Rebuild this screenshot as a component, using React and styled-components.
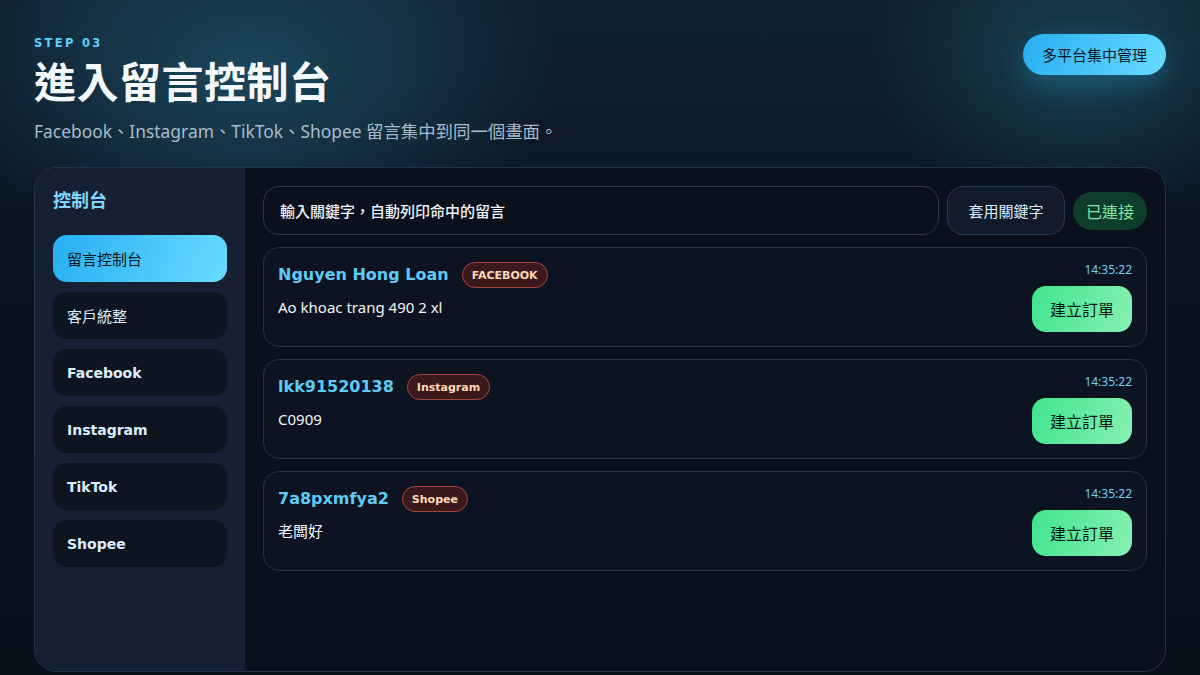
import React from 'react';
import styled, { createGlobalStyle } from 'styled-components';

const GlobalStyle = createGlobalStyle`
  html, body {
    margin: 0;
    padding: 0;
    height: 100%;
    background: #0a101a;
  }
  * { box-sizing: border-box; }
`;

const CJK = `"Noto Sans", "Noto Sans CJK TC", sans-serif`;
const BOLD = `"DejaVu Sans", "Noto Sans CJK TC", sans-serif`;

const comments = [
  { name: 'Nguyen Hong Loan', platform: 'FACEBOOK', text: 'Ao khoac trang 490 2 xl', time: '14:35:22' },
  { name: 'lkk91520138', platform: 'Instagram', text: 'C0909', time: '14:35:22' },
  { name: '7a8pxmfya2', platform: 'Shopee', text: '老闆好', time: '14:35:22' },
];

const navItems = [
  { label: '留言控制台', active: true },
  { label: '客戶統整' },
  { label: 'Facebook', latin: true },
  { label: 'Instagram', latin: true },
  { label: 'TikTok', latin: true },
  { label: 'Shopee', latin: true },
];

export default function App() {
  return (
    <>
      <GlobalStyle />
      <Page>
        <Header>
          <div>
            <Step>STEP 03</Step>
            <Title>進入留言控制台</Title>
            <Subtitle>Facebook、Instagram、TikTok、Shopee 留言集中到同一個畫面。</Subtitle>
          </div>
          <PillButton>多平台集中管理</PillButton>
        </Header>

        <Panel>
          <Sidebar>
            <SideTitle>控制台</SideTitle>
            <NavList>
              {navItems.map((item) => (
                <NavItem key={item.label} $active={item.active} $latin={item.latin}>
                  {item.label}
                </NavItem>
              ))}
            </NavList>
          </Sidebar>

          <Content>
            <Toolbar>
              <KeywordInput>輸入關鍵字，自動列印命中的留言</KeywordInput>
              <ApplyButton>套用關鍵字</ApplyButton>
              <Status>已連接</Status>
            </Toolbar>

            <CardList>
              {comments.map((c) => (
                <Card key={c.name}>
                  <CardMain>
                    <CardHead>
                      <Author>{c.name}</Author>
                      <Badge>{c.platform}</Badge>
                    </CardHead>
                    <Message>{c.text}</Message>
                  </CardMain>
                  <CardSide>
                    <Time>{c.time}</Time>
                    <OrderButton>建立訂單</OrderButton>
                  </CardSide>
                </Card>
              ))}
            </CardList>
          </Content>
        </Panel>
      </Page>
    </>
  );
}

const Page = styled.div`
  width: 1200px;
  height: 675px;
  overflow: hidden;
  padding: 34px 34px 0;
  font-family: ${CJK};
  color: #e6eef8;
  background:
    radial-gradient(ellipse 440px 280px at 250px 70px, rgba(34, 98, 124, 0.6), transparent 70%),
    radial-gradient(ellipse 280px 210px at 1080px 60px, rgba(32, 94, 108, 0.55), transparent 75%),
    linear-gradient(180deg, #10202e 0%, #0b1320 40%, #0a101a 100%);
`;

const Header = styled.header`
  display: flex;
  justify-content: space-between;
  align-items: flex-start;
  height: 133px;
`;

const Step = styled.div`
  font-family: ${BOLD};
  font-weight: 700;
  font-size: 11.5px;
  letter-spacing: 2.3px;
  color: #5fd0ff;
  line-height: 18px;
`;

const Title = styled.h1`
  margin: 4px 0 0;
  font-size: 42px;
  font-weight: 700;
  line-height: 52px;
  color: #f4f8fc;
  letter-spacing: 0.5px;
`;

const Subtitle = styled.p`
  margin: 11px 0 0;
  font-size: 17.4px;
  line-height: 24px;
  color: #a8bccd;
`;

const PillButton = styled.div`
  height: 41px;
  padding: 0 19px;
  display: flex;
  align-items: center;
  border-radius: 21px;
  font-size: 15px;
  color: #0b1a2a;
  background: linear-gradient(110deg, #29aef2, #68dcff);
  box-shadow: 0 10px 28px rgba(41, 174, 242, 0.28);
`;

const Panel = styled.section`
  display: flex;
  height: 505px;
  border: 1px solid #22344a;
  border-radius: 22px;
  overflow: hidden;
  background: #0b111c;
`;

const Sidebar = styled.aside`
  width: 210px;
  flex-shrink: 0;
  background: #162032;
  padding: 18px 18px;
`;

const SideTitle = styled.div`
  font-size: 18px;
  font-weight: 700;
  color: #7fd6ff;
  line-height: 28px;
  margin-bottom: 21px;
`;

const NavList = styled.nav`
  display: flex;
  flex-direction: column;
  gap: 10px;
`;

const NavItem = styled.div`
  height: 47px;
  display: flex;
  align-items: center;
  padding: 0 14px;
  border-radius: 14px;
  font-family: ${(p) => (p.$latin ? BOLD : CJK)};
  font-weight: ${(p) => (p.$latin ? 700 : 400)};
  font-size: ${(p) => (p.$latin ? '14px' : '15px')};
  color: ${(p) => (p.$active ? '#0a1624' : '#dcefff')};
  background: ${(p) => (p.$active ? 'linear-gradient(110deg, #27aef2, #69dcff)' : '#0d1520')};
`;

const Content = styled.main`
  flex: 1;
  padding: 18px;
  display: flex;
  flex-direction: column;
  gap: 12px;
`;

const Toolbar = styled.div`
  display: flex;
  align-items: center;
  gap: 8px;
`;

const KeywordInput = styled.div`
  flex: 1;
  height: 49px;
  display: flex;
  align-items: center;
  padding: 0 16px;
  border: 1px solid #263a52;
  border-radius: 16px;
  font-size: 15px;
  font-weight: 500;
  color: #eef4fb;
`;

const ApplyButton = styled.div`
  height: 49px;
  width: 118px;
  display: flex;
  align-items: center;
  justify-content: center;
  border: 1px solid #263a52;
  border-radius: 16px;
  background: #111a28;
  font-size: 15px;
  color: #dcecfb;
`;

const Status = styled.div`
  height: 38px;
  width: 74px;
  display: flex;
  align-items: center;
  justify-content: center;
  border-radius: 19px;
  background: #0f3d2b;
  font-size: 16px;
  color: #7ee8a4;
`;

const CardList = styled.div`
  display: flex;
  flex-direction: column;
  gap: 12px;
`;

const Card = styled.article`
  height: 100px;
  display: flex;
  justify-content: space-between;
  padding: 14px;
  border: 1px solid #223349;
  border-radius: 16px;
  background: #0d1320;
`;

const CardMain = styled.div`
  display: flex;
  flex-direction: column;
  gap: 8px;
`;

const CardHead = styled.div`
  display: flex;
  align-items: center;
  gap: 13px;
  height: 26px;
`;

const Author = styled.span`
  font-family: ${BOLD};
  font-weight: 700;
  font-size: 16px;
  color: #5ecbf7;
  margin-top: -2px;
`;

const Badge = styled.span`
  height: 26px;
  padding: 0 9px;
  display: flex;
  align-items: center;
  border-radius: 13px;
  border: 1px solid #a8443a;
  background: #3a1a1c;
  font-family: ${BOLD};
  font-weight: 700;
  font-size: 11px;
  color: #fdd9b5;
`;

const Message = styled.div`
  font-size: 15px;
  line-height: 22px;
  color: #f3f6fa;
`;

const CardSide = styled.div`
  display: flex;
  flex-direction: column;
  align-items: flex-end;
  gap: 8px;
`;

const Time = styled.div`
  font-size: 12px;
  line-height: 16px;
  color: #6fcdf7;
`;

const OrderButton = styled.div`
  width: 100px;
  height: 46px;
  display: flex;
  align-items: center;
  justify-content: center;
  border-radius: 14px;
  font-size: 16px;
  color: #0b1a14;
  background: linear-gradient(110deg, #3fe48d, #88f0b4);
`;
